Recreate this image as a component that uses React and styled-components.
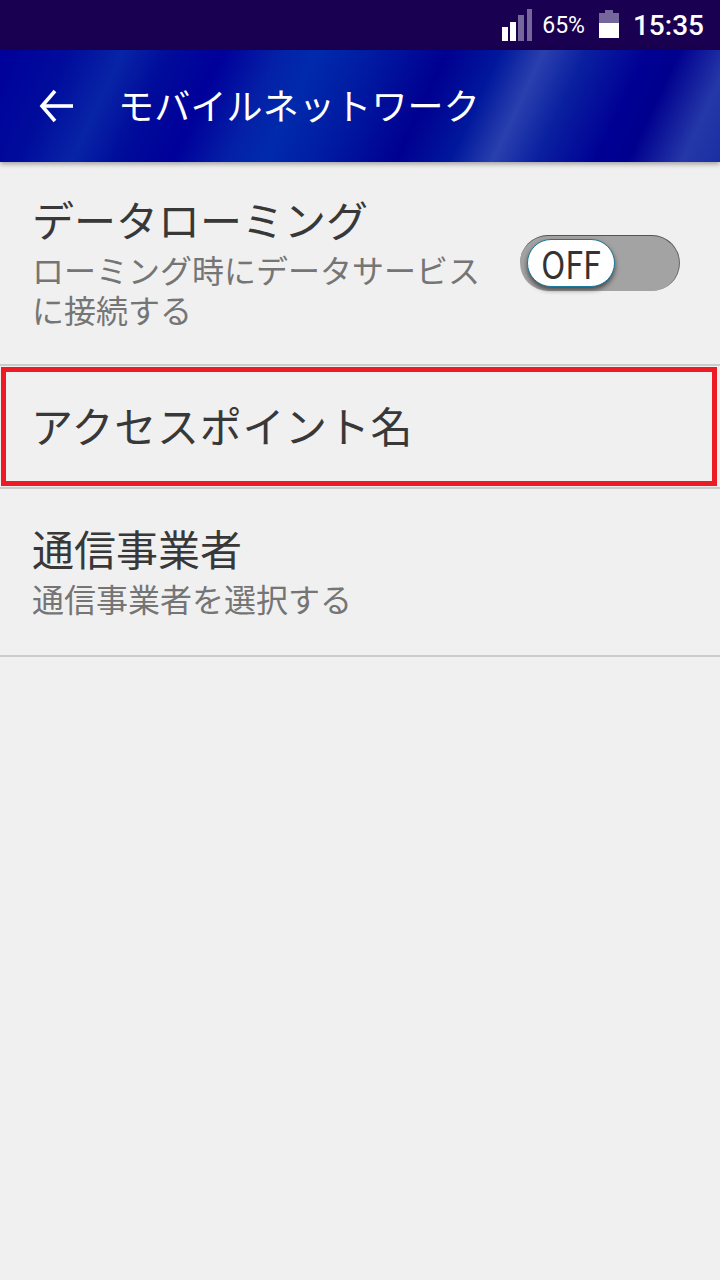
import React from "react";
import styled, { createGlobalStyle } from "styled-components";

const GlobalStyle = createGlobalStyle`
  html, body {
    margin: 0;
    padding: 0;
    background: #f0f0f0;
  }
  *, *::before, *::after {
    box-sizing: border-box;
  }
`;

const Page = styled.div`
  width: 720px;
  height: 1280px;
  overflow: hidden;
  background: #f0f0f0;
  font-family: "Noto Sans CJK JP", "Noto Sans", sans-serif;
`;

const StatusBar = styled.div`
  height: 50px;
  background: #1a0050;
  display: flex;
  align-items: center;
  justify-content: flex-end;
  padding-right: 16px;
  color: #fff;
  font-family: Roboto, sans-serif;
`;

const Percent = styled.span`
  font-size: 23px;
  margin: 0 14px 0 8px;
`;

const Clock = styled.span`
  font-size: 28px;
  font-weight: 500;
  margin-left: 14px;
`;

const AppBar = styled.div`
  height: 112px;
  display: flex;
  align-items: center;
  padding-left: 38px;
  color: #fff;
  position: relative;
  z-index: 1;
  box-shadow: 0 2px 5px rgba(0, 0, 0, 0.35);
  background: linear-gradient(
    115deg,
    #00009a 0%,
    #000c9c 9%,
    #0824a6 16%,
    #000c9a 22%,
    #00009a 29%,
    #0420a6 36%,
    #002aac 41%,
    #001ca2 48%,
    #000090 58%,
    #00189c 65%,
    #2a40ae 70.5%,
    #0a20a0 76%,
    #000094 84%,
    #00008e 88%,
    #2538a8 95%,
    #1a2ea4 100%
  );
`;

const BackIcon = styled.svg`
  width: 36px;
  height: 36px;
  flex: none;
`;

const AppTitle = styled.h1`
  margin: 0 0 4px 44px;
  font-size: 36px;
  font-weight: 400;
  line-height: 1;
  letter-spacing: 0.2px;
`;

const Row = styled.div`
  height: ${(props) => props.height}px;
  display: flex;
  align-items: center;
  justify-content: space-between;
  padding: 0 40px 0 32px;
  border-bottom: 2px solid #cccccc;
`;

const RowText = styled.div`
  display: flex;
  flex-direction: column;
`;

const RowTitle = styled.div`
  font-size: 42px;
  line-height: 52px;
  color: #383838;
  margin: -4px 0 4px;
`;

const RowSub = styled.div`
  font-size: 32px;
  line-height: 40px;
  color: #757575;
  width: 460px;
`;

const Highlight = styled.div`
  position: relative;
  height: 123px;
  display: flex;
  align-items: center;
  padding: 4px 0 0 31px;
  border-bottom: 2px solid #cccccc;
  letter-spacing: 0.7px;

  &::after {
    content: "";
    position: absolute;
    left: 1px;
    top: 1px;
    width: 716px;
    height: 119px;
    border: 5px solid #ed1c24;
  }
`;

const Toggle = styled.div`
  width: 160px;
  height: 56px;
  border-radius: 28px;
  background: #a3a3a3;
  border-top: 1px solid #555;
  border-right: 1px solid #666;
  padding: 3px 0 0 7px;
  flex: none;
`;

const ToggleKnob = styled.div`
  width: 88px;
  height: 48px;
  border-radius: 24px;
  background: #fff;
  border: 1.5px solid #1b7a9c;
  box-shadow: 0 3px 5px rgba(0, 0, 0, 0.55);
  display: flex;
  align-items: center;
  justify-content: center;
`;

const ToggleLabel = styled.span`
  font-size: 38px;
  font-weight: 400;
  line-height: 1;
  color: #333;
  transform: scaleX(0.85);
`;

const BatterySvg = styled.svg`
  margin-bottom: 2px;
`;

const SignalBars = () => (
  <svg width="32" height="32" viewBox="0 0 32 32">
    <rect x="0" y="18" width="6" height="14" fill="#fff" />
    <rect x="8" y="13" width="6" height="19" fill="#fff" />
    <rect x="16" y="6" width="6" height="26" fill="#75669b" />
    <rect x="25" y="0" width="5" height="32" fill="#75669b" />
  </svg>
);

const BatteryIcon = () => (
  <BatterySvg width="20" height="28" viewBox="0 0 20 28">
    <path d="M6 0h8v3h6v10H0V3h6z" fill="#75669b" />
    <rect x="0" y="13" width="20" height="15" fill="#fff" />
  </BatterySvg>
);

const App = () => {
  return (
    <Page>
      <GlobalStyle />
      <StatusBar>
        <SignalBars />
        <Percent>65%</Percent>
        <BatteryIcon />
        <Clock>15:35</Clock>
      </StatusBar>
      <AppBar>
        <BackIcon viewBox="0 0 36 36" fill="none" stroke="#fff" strokeWidth="3.6">
          <path d="M35 18H5" />
          <path d="M17 3L4 18l13 15" />
        </BackIcon>
        <AppTitle>モバイルネットワーク</AppTitle>
      </AppBar>
      <Row height={204}>
        <RowText>
          <RowTitle>データローミング</RowTitle>
          <RowSub>ローミング時にデータサービスに接続する</RowSub>
        </RowText>
        <Toggle>
          <ToggleKnob>
            <ToggleLabel>OFF</ToggleLabel>
          </ToggleKnob>
        </Toggle>
      </Row>
      <Highlight>
        <RowTitle>アクセスポイント名</RowTitle>
      </Highlight>
      <Row height={168}>
        <RowText>
          <RowTitle>通信事業者</RowTitle>
          <RowSub>通信事業者を選択する</RowSub>
        </RowText>
      </Row>
    </Page>
  );
};

export default App;
